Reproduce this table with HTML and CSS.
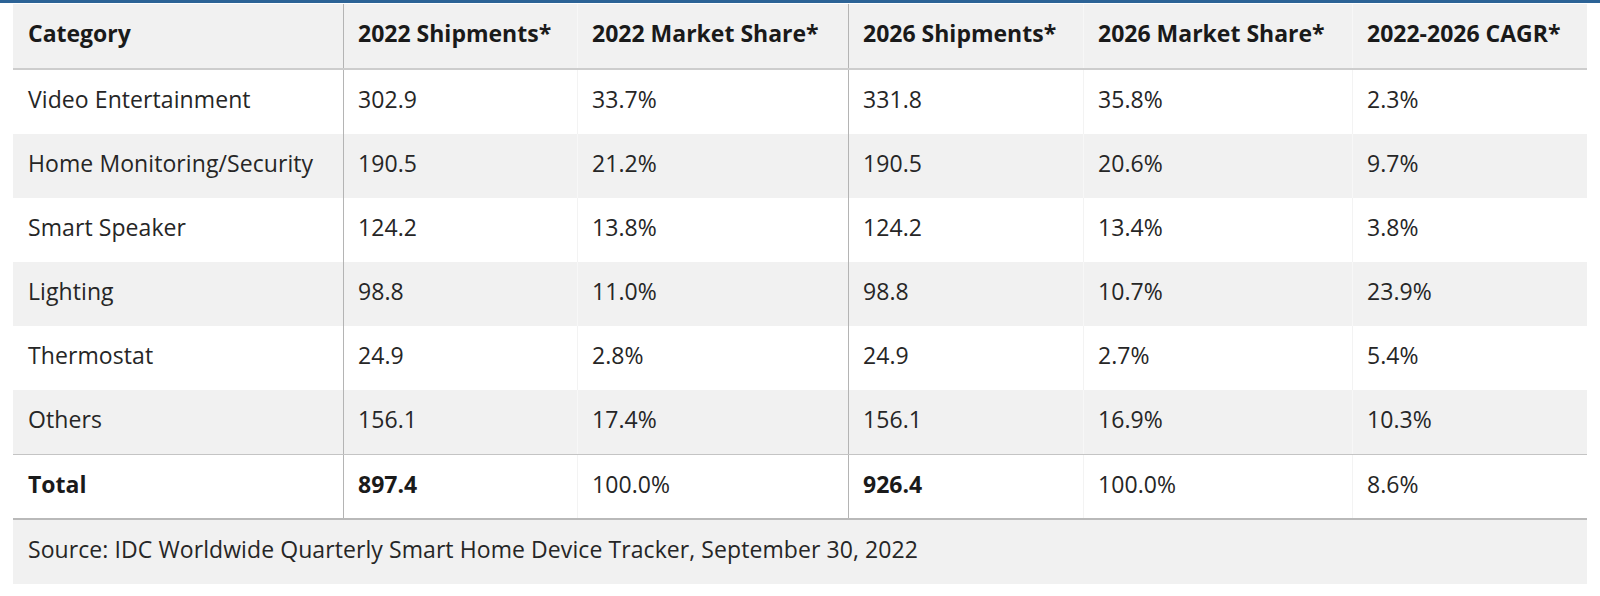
FILE: index.html
```html
<!DOCTYPE html>
<html lang="en">
<head>
<meta charset="utf-8">
<title>Smart Home Device Shipments</title>
<link rel="stylesheet" href="styles.css">
</head>
<body>
<div class="topbar"></div>
<div class="table">
  <div class="row head">
    <div class="cell first">Category</div>
    <div class="cell major">2022 Shipments*</div>
    <div class="cell">2022 Market Share*</div>
    <div class="cell major">2026 Shipments*</div>
    <div class="cell">2026 Market Share*</div>
    <div class="cell">2022-2026 CAGR*</div>
  </div>
  <div class="row">
    <div class="cell first">Video Entertainment</div>
    <div class="cell major">302.9</div>
    <div class="cell">33.7%</div>
    <div class="cell major">331.8</div>
    <div class="cell">35.8%</div>
    <div class="cell">2.3%</div>
  </div>
  <div class="row alt">
    <div class="cell first">Home Monitoring/Security</div>
    <div class="cell major">190.5</div>
    <div class="cell">21.2%</div>
    <div class="cell major">190.5</div>
    <div class="cell">20.6%</div>
    <div class="cell">9.7%</div>
  </div>
  <div class="row">
    <div class="cell first">Smart Speaker</div>
    <div class="cell major">124.2</div>
    <div class="cell">13.8%</div>
    <div class="cell major">124.2</div>
    <div class="cell">13.4%</div>
    <div class="cell">3.8%</div>
  </div>
  <div class="row alt">
    <div class="cell first">Lighting</div>
    <div class="cell major">98.8</div>
    <div class="cell">11.0%</div>
    <div class="cell major">98.8</div>
    <div class="cell">10.7%</div>
    <div class="cell">23.9%</div>
  </div>
  <div class="row">
    <div class="cell first">Thermostat</div>
    <div class="cell major">24.9</div>
    <div class="cell">2.8%</div>
    <div class="cell major">24.9</div>
    <div class="cell">2.7%</div>
    <div class="cell">5.4%</div>
  </div>
  <div class="row alt">
    <div class="cell first">Others</div>
    <div class="cell major">156.1</div>
    <div class="cell">17.4%</div>
    <div class="cell major">156.1</div>
    <div class="cell">16.9%</div>
    <div class="cell">10.3%</div>
  </div>
  <div class="row total">
    <div class="cell first bold">Total</div>
    <div class="cell major bold">897.4</div>
    <div class="cell">100.0%</div>
    <div class="cell major bold">926.4</div>
    <div class="cell">100.0%</div>
    <div class="cell">8.6%</div>
  </div>
  <div class="source">Source: IDC Worldwide Quarterly Smart Home Device Tracker, September 30, 2022</div>
</div>
</body>
</html>
```

FILE: styles.css
```css
html, body {
  margin: 0;
  padding: 0;
  background: #ffffff;
}

body {
  font-family: "Open Sans", "Liberation Sans", sans-serif;
  font-size: 23px;
  color: #262626;
  letter-spacing: 0.08px;
}

.topbar {
  height: 3px;
  background: #2c6396;
  margin-bottom: 1px;
}

.table {
  margin-left: 13px;
  width: 1574px;
}

.row {
  display: grid;
  grid-template-columns: 330px 234px 271px 235px 269px 235px;
  background: #ffffff;
}

.row.alt,
.row.head {
  background: #f1f1f1;
}

.row.head {
  border-bottom: 2px solid #cdcdcd;
  font-weight: 700;
  color: #1a1a1a;
  letter-spacing: 0;
}

.cell {
  box-sizing: border-box;
  height: 64px;
  display: flex;
  align-items: center;
  padding: 0 8px 6px 14px;
  border-left: 1px solid #f3f3f3;
  white-space: nowrap;
}

.row.alt .cell,
.row.head .cell {
  border-left-color: #f7f7f7;
}

.cell.first {
  padding-left: 15px;
  border-left: none;
}

.row .cell.major {
  border-left: 1px solid #b4b4b4;
}

.row.total {
  border-top: 1px solid #c4c4c4;
  border-bottom: 2px solid #b9b9b9;
}

.row.total .cell {
  height: 63px;
}

.bold {
  font-weight: 700;
  color: #1a1a1a;
  letter-spacing: 0;
}

.source {
  box-sizing: border-box;
  height: 64px;
  display: flex;
  align-items: center;
  padding: 0 15px 6px;
  background: #f1f1f1;
}
```
